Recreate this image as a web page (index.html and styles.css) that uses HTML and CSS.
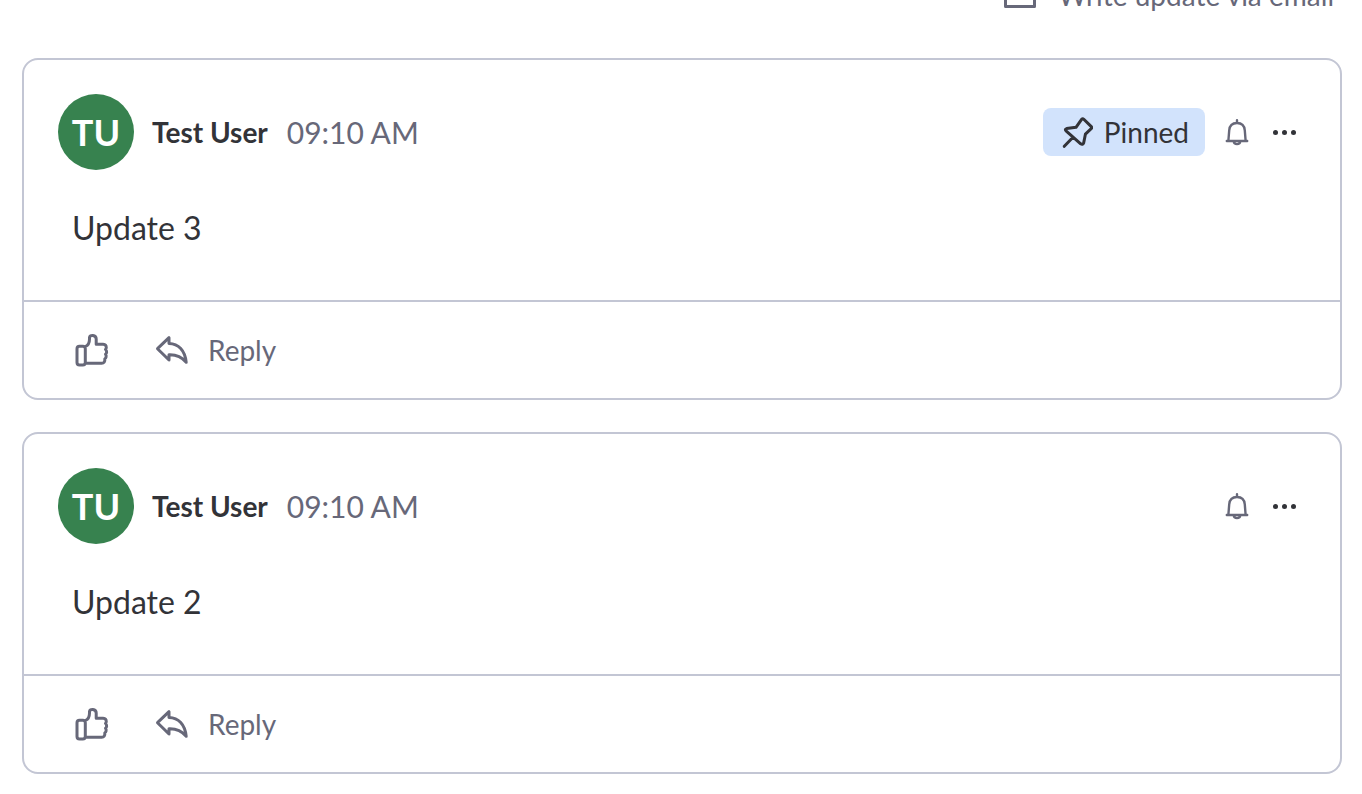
FILE: index.html
```html
<!DOCTYPE html>
<html lang="en">
<head>
  <meta charset="UTF-8">
  <meta name="viewport" content="width=device-width, initial-scale=1.0">
  <title>Updates</title>
  <link rel="stylesheet" href="styles.css">
</head>
<body>
  <!-- Shared icons -->
  <svg class="sprite" aria-hidden="true">
    <symbol id="icon-mail" viewBox="0 0 32 26">
      <path d="M1.5 1.5h29v23h-29zM2 2l14 9L30 2"/>
    </symbol>
    <symbol id="icon-pin" viewBox="0 0 32 32">
      <path d="M20.6 3.3Q21.7 2.3 22.8 3.3L30.3 10.6Q31.3 11.7 30.2 12.7L24.4 18.2L22.7 26.8Q21.6 29.2 19.7 27.8L5 14.8Q3.6 13.2 5.6 12.6L15 11.3ZM12 21.3L3.3 30.3"/>
    </symbol>
    <symbol id="icon-bell" viewBox="0 0 28 28">
      <path d="M14 2.2V4.5M3.8 23H24.2M5.4 22.5L6.2 12.5C6.6 7.5 9.6 5 14 5S21.4 7.5 21.8 12.5L22.6 22.5M10.8 23.5C11 27 17 27 17.2 23.5"/>
    </symbol>
    <symbol id="icon-like" viewBox="0 0 34 34">
      <path d="M4.5 13.3H7.8Q10.3 13.3 10.3 15.8V29.5Q10.3 32 7.8 32H4.5Q2 32 2 29.5V15.8Q2 13.3 4.5 13.3ZM10.5 13.5C13.3 12.2 14.5 9.5 14.5 6V4.5C14.5 1.5 21.2 1.5 21.2 6V11.2H28C31.2 11.2 32.2 14.5 30.5 16.5C32.2 18 31.8 20.5 30.5 21.2C31.8 23 31 25.2 29.8 25.8C30.2 28.7 28.8 30.3 26.7 30.3H10.5"/>
    </symbol>
    <symbol id="icon-reply" viewBox="0 0 34 34">
      <path d="M2.5 15.7L14 4.7V10.5C23.5 10.7 30 17.5 31.2 29.3C26.5 23.7 21.5 21.5 14 21.8V27Z"/>
    </symbol>
  </svg>

  <main class="feed">
    <div class="toolbar">
      <button type="button" class="btn btn-email">
        <svg class="icon icon-mail"><use href="#icon-mail"/></svg>
        Write update via email
      </button>
    </div>

    <article class="post">
      <header class="post-header">
        <span class="avatar">TU</span>
        <a class="author" href="#">Test User</a>
        <time class="time" datetime="09:10">09:10 AM</time>
        <div class="post-actions">
          <button type="button" class="btn btn-pinned">
            <svg class="icon icon-pin"><use href="#icon-pin"/></svg>
            Pinned
          </button>
          <button type="button" class="btn" aria-label="Notifications">
            <svg class="icon icon-bell"><use href="#icon-bell"/></svg>
          </button>
          <button type="button" class="btn btn-more" aria-label="More options">
            <span class="dot"></span><span class="dot"></span><span class="dot"></span>
          </button>
        </div>
      </header>
      <p class="post-body">Update 3</p>
      <footer class="post-footer">
        <button type="button" class="btn" aria-label="Like">
          <svg class="icon"><use href="#icon-like"/></svg>
        </button>
        <button type="button" class="btn btn-reply">
          <svg class="icon"><use href="#icon-reply"/></svg>
          Reply
        </button>
      </footer>
    </article>

    <article class="post">
      <header class="post-header">
        <span class="avatar">TU</span>
        <a class="author" href="#">Test User</a>
        <time class="time" datetime="09:10">09:10 AM</time>
        <div class="post-actions">
          <button type="button" class="btn" aria-label="Notifications">
            <svg class="icon icon-bell"><use href="#icon-bell"/></svg>
          </button>
          <button type="button" class="btn btn-more" aria-label="More options">
            <span class="dot"></span><span class="dot"></span><span class="dot"></span>
          </button>
        </div>
      </header>
      <p class="post-body">Update 2</p>
      <footer class="post-footer">
        <button type="button" class="btn" aria-label="Like">
          <svg class="icon"><use href="#icon-like"/></svg>
        </button>
        <button type="button" class="btn btn-reply">
          <svg class="icon"><use href="#icon-reply"/></svg>
          Reply
        </button>
      </footer>
    </article>
  </main>
</body>
</html>
```
FILE: styles.css
```css
* {
  box-sizing: border-box;
}

body {
  margin: 0;
  background: #fff;
  color: #323338;
  font-family: Lato, "Open Sans", sans-serif;
  font-size: 28px;
  line-height: 36px;
}

.sprite {
  display: none;
}

.feed {
  display: flex;
  flex-direction: column;
  gap: 32px;
  padding: 0 20px 20px 22px;
}

/* Toolbar is partly scrolled out of view */
.toolbar {
  display: flex;
  justify-content: flex-end;
  margin-top: -23px;
  padding: 0 8px 13px;
}

/* Buttons */
.btn {
  display: flex;
  align-items: center;
  padding: 0;
  border: none;
  background: none;
  color: #676879;
  font: inherit;
  cursor: pointer;
}

.icon {
  width: 34px;
  height: 34px;
  fill: none;
  stroke: #676879;
  stroke-width: 3;
  stroke-linecap: round;
  stroke-linejoin: round;
}

.btn-email {
  gap: 22px;
}

.icon-mail {
  width: 32px;
  height: 26px;
}

.btn-pinned {
  gap: 11px;
  height: 48px;
  padding: 0 16px 0 18px;
  border-radius: 8px;
  background: #d2e3fc;
  color: #323338;
}

.icon-pin {
  width: 32px;
  height: 32px;
  stroke: #323338;
}

.icon-bell {
  width: 28px;
  height: 28px;
  stroke-width: 2.4;
}

.btn-more {
  gap: 4px;
  padding: 0 4px;
}

.dot {
  width: 5px;
  height: 5px;
  border-radius: 50%;
  background: #323338;
}

.btn-reply {
  gap: 19px;
}

/* Post card */
.post {
  border: 2px solid #c3c6d4;
  border-radius: 16px;
}

.post-header {
  display: flex;
  align-items: center;
  padding: 34px 40px 0 34px;
}

.avatar {
  display: flex;
  align-items: center;
  justify-content: center;
  width: 76px;
  height: 76px;
  margin-right: 18px;
  border-radius: 50%;
  background: #37824f;
  color: #fff;
  font-size: 36px;
  font-weight: 700;
}

.author {
  margin-right: 19px;
  color: #323338;
  font-weight: 700;
  text-decoration: none;
}

.time {
  color: #676879;
  font-size: 30px;
}

.post-actions {
  display: flex;
  align-items: center;
  gap: 18px;
  margin-left: auto;
}

.post-body {
  margin: 0;
  padding: 38px 48px 52px;
  font-size: 32px;
  line-height: 40px;
}

.post-footer {
  display: flex;
  align-items: center;
  gap: 46px;
  padding: 30px 51px;
  border-top: 2px solid #c3c6d4;
}
```
